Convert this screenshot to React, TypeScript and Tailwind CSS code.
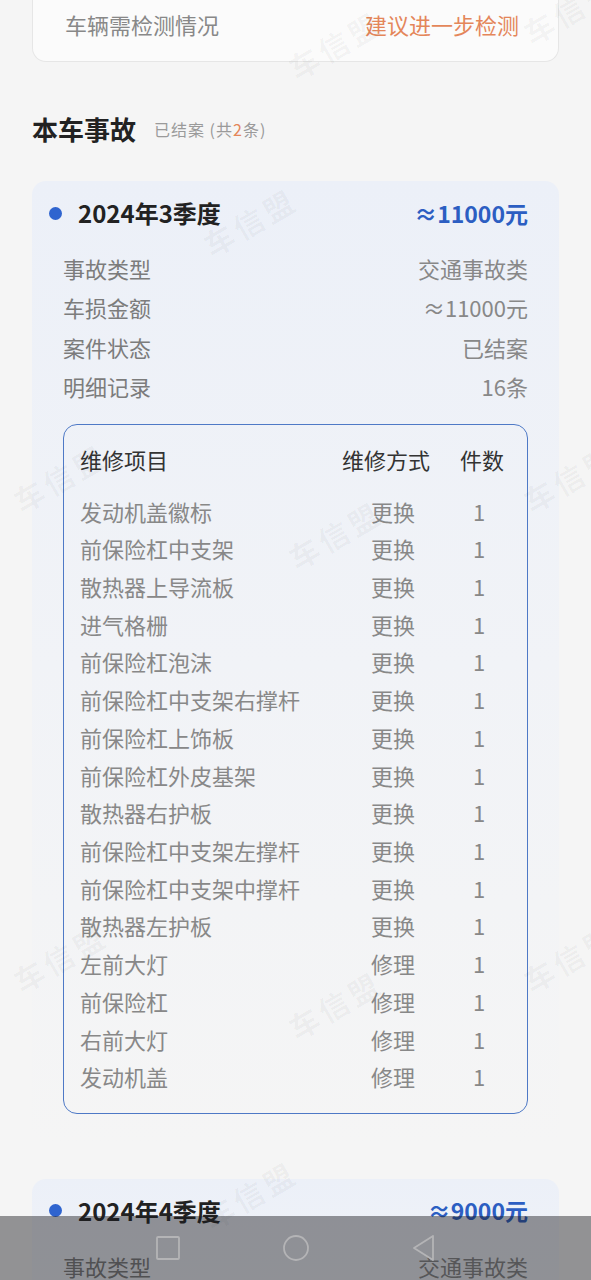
import { ReactNode } from "react";

const font = { fontFamily: '"Noto Sans CJK SC", "Noto Sans", sans-serif' };

type Accident = {
  quarter: string;
  amount: string;
  type: string;
  status: string;
  count: string;
  items: [string, string, string][];
};

const accidents: Accident[] = [
  {
    quarter: "2024年3季度",
    amount: "≈11000元",
    type: "交通事故类",
    status: "已结案",
    count: "16条",
    items: [
      ["发动机盖徽标", "更换", "1"],
      ["前保险杠中支架", "更换", "1"],
      ["散热器上导流板", "更换", "1"],
      ["进气格栅", "更换", "1"],
      ["前保险杠泡沫", "更换", "1"],
      ["前保险杠中支架右撑杆", "更换", "1"],
      ["前保险杠上饰板", "更换", "1"],
      ["前保险杠外皮基架", "更换", "1"],
      ["散热器右护板", "更换", "1"],
      ["前保险杠中支架左撑杆", "更换", "1"],
      ["前保险杠中支架中撑杆", "更换", "1"],
      ["散热器左护板", "更换", "1"],
      ["左前大灯", "修理", "1"],
      ["前保险杠", "修理", "1"],
      ["右前大灯", "修理", "1"],
      ["发动机盖", "修理", "1"],
    ],
  },
  {
    quarter: "2024年4季度",
    amount: "≈9000元",
    type: "交通事故类",
    status: "已结案",
    count: "12条",
    items: [],
  },
];

// faint "车信盟" watermark tiles
const watermarks = [
  [250, 222],
  [335, 45],
  [570, 10],
  [60, 478],
  [335, 535],
  [570, 478],
  [60, 958],
  [335, 1005],
  [570, 958],
  [250, 1195],
];

function InfoRow({ label, value }: { label: string; value: ReactNode }) {
  return (
    <div className="flex h-[39.3px] items-center justify-between text-[22px]">
      <span className="text-[#7c7c7c]">{label}</span>
      <span className="text-[#888]">{value}</span>
    </div>
  );
}

function AccidentCard({ data }: { data: Accident }) {
  return (
    <div className="mx-[32px] rounded-[14px] bg-gradient-to-b from-[#ecf0f8] via-[#f1f3f7] to-[#f5f5f5] px-[31px] pt-[16px] pb-[30px]">
      <div className="flex h-[32px] items-center justify-between">
        <div className="flex items-center">
          <span className="-ml-[14px] mr-[16px] h-[13px] w-[13px] rounded-full bg-[#2f64cf]" />
          <span className="text-[24px] font-bold text-[#222]">{data.quarter}</span>
        </div>
        <span className="text-[23px] font-bold text-[#2c5ec2]">{data.amount}</span>
      </div>
      <div className="mt-[20px]">
        <InfoRow label="事故类型" value={data.type} />
        <InfoRow label="车损金额" value={data.amount} />
        <InfoRow label="案件状态" value={data.status} />
        <InfoRow label="明细记录" value={data.count} />
      </div>
      {data.items.length > 0 && (
        <div className="mt-[18px] rounded-[14px] border-[1.5px] border-[#4e79c6] pt-[19px] pr-[23px] pb-[17px] pl-[16px]">
          <div className="flex h-[30px] items-center text-[22px] text-[#333]">
            <span className="flex-1">维修项目</span>
            <span className="w-[88px]">维修方式</span>
            <span className="ml-[30px] w-[44px] text-center">件数</span>
          </div>
          <div className="mt-[18px]">
            {data.items.map(([name, way, n], i) => (
              <div key={i} className="flex h-[37.73px] items-center text-[22px] text-[#888]">
                <span className="flex-1">{name}</span>
                <span className="w-[88px] pl-[29px]">{way}</span>
                <span className="ml-[30px] w-[44px] pr-[6px] text-center">{n}</span>
              </div>
            ))}
          </div>
        </div>
      )}
    </div>
  );
}

export default function App() {
  return (
    <div className="relative h-[1280px] w-[591px] overflow-hidden bg-[#f5f5f5]" style={font}>
      <div className="mx-[32px] flex h-[62px] items-start justify-between rounded-b-[14px] border border-t-0 border-[#e6e6e6] bg-[#fbfbfb] pt-[8px] pr-[39px] pl-[32px] text-[22px]">
        <span className="text-[#888]">车辆需检测情况</span>
        <span className="text-[#e4865a]">建议进一步检测</span>
      </div>

      <div className="mt-[47px] flex items-center px-[32px]">
        <span className="text-[26px] font-bold text-[#222]">本车事故</span>
        <span className="ml-[18px] text-[16px] tracking-[1px] text-[#9a9a9a]">
          已结案 (共<span className="text-[#e4865a]">2</span>条)
        </span>
      </div>

      <div className="mt-[33px] flex flex-col gap-[35px]">
        {accidents.map((a, i) => (
          <AccidentCard key={i} data={a} />
        ))}
      </div>

      {watermarks.map(([x, y], i) => (
        <span
          key={i}
          className="pointer-events-none absolute -translate-x-1/2 -translate-y-1/2 -rotate-[30deg] whitespace-nowrap text-[30px] font-bold tracking-[4px] text-black/[0.035]"
          style={{ left: x, top: y }}
        >
          车信盟
        </span>
      ))}

      <div className="absolute right-0 bottom-0 left-0 flex h-[64px] items-center justify-center gap-[101px] bg-[#1a1a20]/45">
        <svg width="26" height="26" viewBox="0 0 26 26" fill="none" stroke="#b4b4b6" strokeWidth="1.8">
          <rect x="2" y="2" width="22" height="22" rx="1" />
        </svg>
        <svg width="28" height="28" viewBox="0 0 28 28" fill="none" stroke="#b4b4b6" strokeWidth="1.8">
          <circle cx="14" cy="14" r="12" />
        </svg>
        <svg width="26" height="28" viewBox="0 0 26 28" fill="none" stroke="#b4b4b6" strokeWidth="1.8" strokeLinejoin="round">
          <path d="M22 2 L3 14 L22 26 Z" />
        </svg>
      </div>
    </div>
  );
}
